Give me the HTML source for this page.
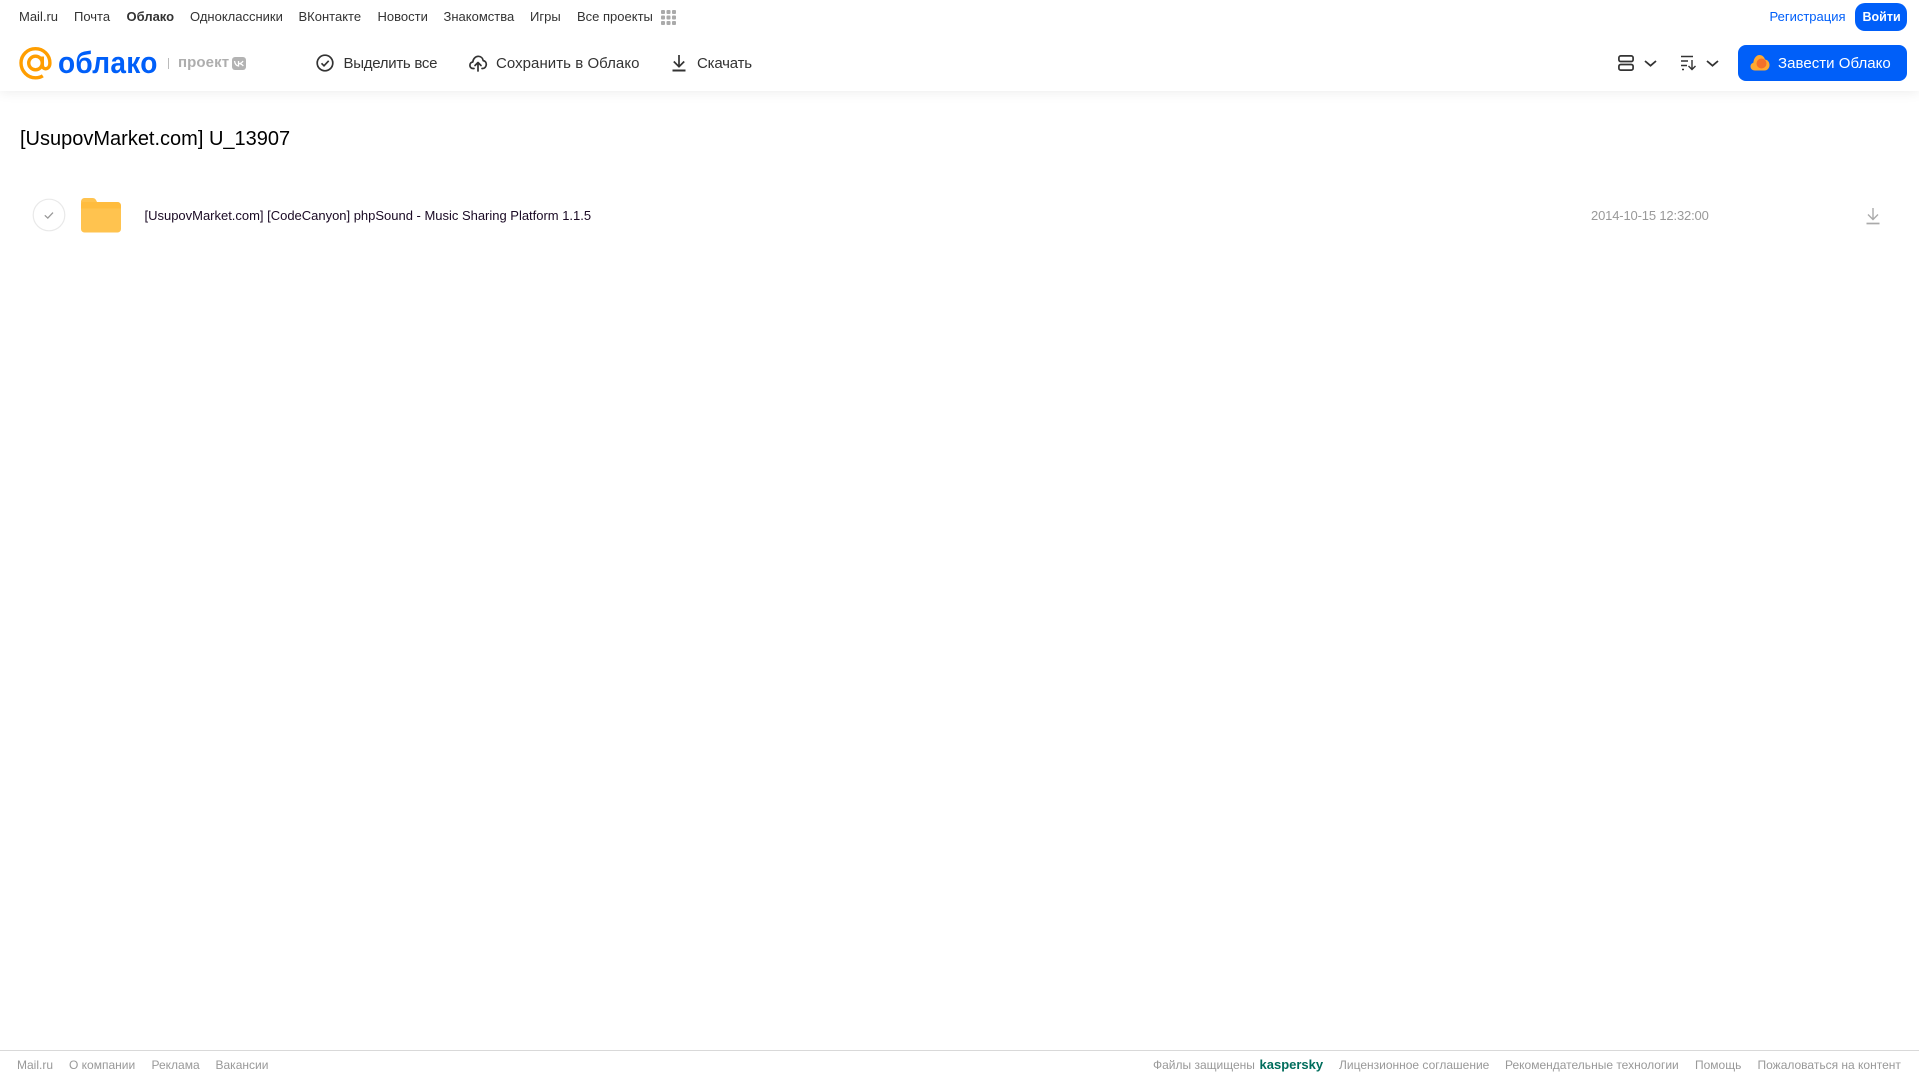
<!DOCTYPE html>
<html lang="ru">
<head>
<meta charset="utf-8">
<title>Облако</title>
<style>
html,body{margin:0;padding:0;background:#fff;}
body{width:1919px;height:1079px;position:relative;overflow:hidden;font-family:"Liberation Sans",Arial,sans-serif;}
.t{position:absolute;white-space:nowrap;line-height:20px;}
.top{top:6.5px;font-size:13px;color:#333;}
.tb{top:53.5px;font-size:15px;color:#333;}
.f{top:1055px;font-size:12px;color:#999;}
svg{position:absolute;overflow:visible;}
#hdr{position:absolute;left:0;top:0;width:1919px;height:91px;background:#fff;box-shadow:0 1px 12px rgba(0,0,0,.08);}
#foot{position:absolute;left:0;top:1050px;width:1919px;height:1px;background:#d9d9d9;}
.btn{position:absolute;background:#005ff9;}
</style>
</head>
<body>
<div id="hdr"></div>

<span class="t top" style="left:19px">Mail.ru</span>
<span class="t top" style="left:74px">Почта</span>
<span class="t top" style="left:126.5px;font-weight:bold">Облако</span>
<span class="t top" style="left:190px">Одноклассники</span>
<span class="t top" style="left:298.5px">ВКонтакте</span>
<span class="t top" style="left:377.5px">Новости</span>
<span class="t top" style="left:443.5px">Знакомства</span>
<span class="t top" style="left:530px">Игры</span>
<span class="t top" style="left:577px">Все проекты</span>
<svg style="left:661px;top:10px" width="15" height="15" fill="#aaa"><rect width="4" height="4" rx="1"/><rect x="5.5" width="4" height="4" rx="1"/><rect x="11" width="4" height="4" rx="1"/><rect y="5.5" width="4" height="4" rx="1"/><rect x="5.5" y="5.5" width="4" height="4" rx="1"/><rect x="11" y="5.5" width="4" height="4" rx="1"/><rect y="11" width="4" height="4" rx="1"/><rect x="5.5" y="11" width="4" height="4" rx="1"/><rect x="11" y="11" width="4" height="4" rx="1"/></svg>

<span class="t" style="left:1769.500px;top:6.5px;font-size:13px;color:#005ff9">Регистрация</span>
<div class="btn" style="left:1855px;top:3px;width:52px;height:28px;border-radius:10px"></div>
<span class="t" style="left:1862.500px;top:6.5px;font-size:12.500px;font-weight:bold;color:#fff">Войти</span>

<svg style="left:19px;top:47px" width="33" height="33" viewBox="0 0 33 33" fill="none" stroke="#ff9e00" stroke-width="3.4"><circle cx="16.5" cy="16" r="6.8"/><path d="M23.3 9.5v8.5c0 5.4 7.6 5.2 7.6-2 0-8-6.400-14.300-14.400-14.300S2 8 2 16s6.500 14.800 14.500 14.800c3 0 5.300-.7 7.300-2"/></svg>
<span class="t" style="left:57.500px;top:46px;font-size:31px;line-height:34px;font-weight:bold;color:#005ff9;letter-spacing:.3px;transform:scaleX(.905);transform-origin:0 50%">облако</span>
<div style="position:absolute;left:168px;top:58px;width:1px;height:11px;background:#bbb"></div>
<span class="t" style="left:178px;top:52.500px;font-size:15px;font-weight:bold;color:#aeaeae;letter-spacing:.1px">проект</span>
<div style="position:absolute;left:232px;top:57px;width:14px;height:13px;background:#b3b3b3;border-radius:3px"></div>
<svg style="left:234px;top:60px" width="10" height="7" fill="none" stroke="#fff" stroke-width="1.300"><path d="M.5 1c.500 3 2 4.800 4 5V1M9 1C8 3 7 3.500 5 3.600 7 3.700 8.200 4.500 9.300 6"/></svg>

<svg style="left:316px;top:54px" width="18" height="18" fill="none" stroke="#333" stroke-width="1.700"><circle cx="9" cy="9" r="7.800"/><path d="M5.500 9.300l2.500 2.500 4.700-5"/></svg>
<span class="t tb" style="left:343.500px;letter-spacing:-.28px">Выделить все</span>

<svg style="left:469px;top:54px" width="18" height="18" fill="none" stroke="#333" stroke-width="1.700" stroke-linecap="round" stroke-linejoin="round"><path d="M5 14.500H4.200C2 14.500.9 13 .9 11.200c0-1.800 1.300-3 2.900-3.200C4 5 6.300 2.300 9.300 2.300c2.700 0 4.500 2 4.900 4.300 2 .3 3.100 1.900 3.100 3.700 0 2.400-1.600 4.200-3.800 4.200H13"/><path d="M9 17V9M6 11.500L9 8.500l3 3"/></svg>
<span class="t tb" style="left:496px;letter-spacing:.05px">Сохранить в Облако</span>

<svg style="left:671px;top:54px" width="16" height="18" fill="none" stroke="#333" stroke-width="1.700"><path d="M8 1v11.500M2.800 7.500L8 12.700l5.200-5.200"/><path d="M1.500 16.500h13" stroke-width="2"/></svg>
<span class="t tb" style="left:697px;letter-spacing:-.2px">Скачать</span>

<svg style="left:1618px;top:55px" width="16" height="16" fill="none" stroke="#333" stroke-width="1.700"><rect x=".9" y=".9" width="14.200" height="5.600" rx="1.800"/><rect x=".9" y="9.500" width="14.200" height="5.600" rx="1.800"/></svg>
<svg style="left:1644px;top:60px" width="13" height="7" fill="none" stroke="#333" stroke-width="1.800"><path d="M1 1l5.500 4.700L12 1"/></svg>
<svg style="left:1681px;top:55px" width="16" height="16" fill="none" stroke="#333" stroke-width="1.400"><path d="M0 1.500h12M0 6h7M0 10.500h6M1 14.500h2"/><path d="M11 5v9.500M7.500 11l3.500 3.500L14.500 11"/></svg>
<svg style="left:1706px;top:60px" width="13" height="7" fill="none" stroke="#333" stroke-width="1.800"><path d="M1 1l5.500 4.700L12 1"/></svg>

<div class="btn" style="left:1738px;top:45px;width:169px;height:36px;border-radius:8px"></div>
<svg style="left:1750px;top:54px" width="20" height="17"><path d="M5 16.500C2 16.500.5 14.500.5 12.500c0-2 1.300-3.300 2.800-3.700C3.800 4 6.500 1 9.500 1c2.800 0 4.800 2 5.500 4.500 2.800.3 4.500 2.800 4.500 5.500 0 3-2 5.500-5 5.500z" fill="#ffa930"/><circle cx="11.500" cy="9.500" r="5" fill="#f4702a"/></svg>
<span class="t" style="left:1778px;top:53.500px;font-size:15px;color:#fff;letter-spacing:.04px">Завести Облако</span>

<span class="t" style="left:20px;top:126.500px;font-size:20px;line-height:24px;color:#000">[UsupovMarket.com] U_13907</span>

<svg style="left:32px;top:198px" width="34" height="34" fill="none"><circle cx="17" cy="17" r="15.800" stroke="#e9e9e9" stroke-width="1.200"/><path d="M12.800 17.300l3 2.800 5.200-5.500" stroke="#999" stroke-width="1.300"/></svg>
<svg style="left:81px;top:198px" width="40" height="34.500"><path d="M0 3.500a3.500 3.500 0 0 1 3.500-3.500h8c2.500 0 3.500 1.500 4.500 4h20.500a3.500 3.500 0 0 1 3.500 3.500v23.500a3.500 3.500 0 0 1-3.500 3.500H3.500a3.500 3.500 0 0 1-3.500-3.500z" fill="#ffc34f"/><path d="M0 6.500a2.500 2.500 0 0 1 2.500-2.500h34a3.500 3.500 0 0 1 3.500 3.500v3H0z" fill="#ffb938" opacity=".7"/></svg>
<span class="t" style="left:144.500px;top:205.500px;font-size:13px;color:#1a0a24;letter-spacing:-.01px">[UsupovMarket.com] [CodeCanyon] phpSound - Music Sharing Platform 1.1.5</span>
<span class="t" style="left:1591px;top:205.500px;font-size:13px;color:#999;letter-spacing:-.16px">2014-10-15 12:32:00</span>
<svg style="left:1866px;top:207px" width="14" height="18" fill="none" stroke="#aaa" stroke-width="1.400"><path d="M7 1v11M2 7.500L7 12.500l5-5"/><path d="M.500 16.500h13" stroke-width="1.700"/></svg>

<div id="foot"></div>
<span class="t f" style="left:17px">Mail.ru</span>
<span class="t f" style="left:69px">О компании</span>
<span class="t f" style="left:151.500px">Реклама</span>
<span class="t f" style="left:215.500px">Вакансии</span>
<span class="t f" style="left:1153px">Файлы защищены</span>
<span class="t f" style="left:1259.500px;font-size:13px;font-weight:bold;color:#006d5c">kaspersky</span>
<span class="t f" style="left:1339px">Лицензионное соглашение</span>
<span class="t f" style="left:1505px">Рекомендательные технологии</span>
<span class="t f" style="left:1695px">Помощь</span>
<span class="t f" style="left:1757.500px">Пожаловаться на контент</span>
</body>
</html>
